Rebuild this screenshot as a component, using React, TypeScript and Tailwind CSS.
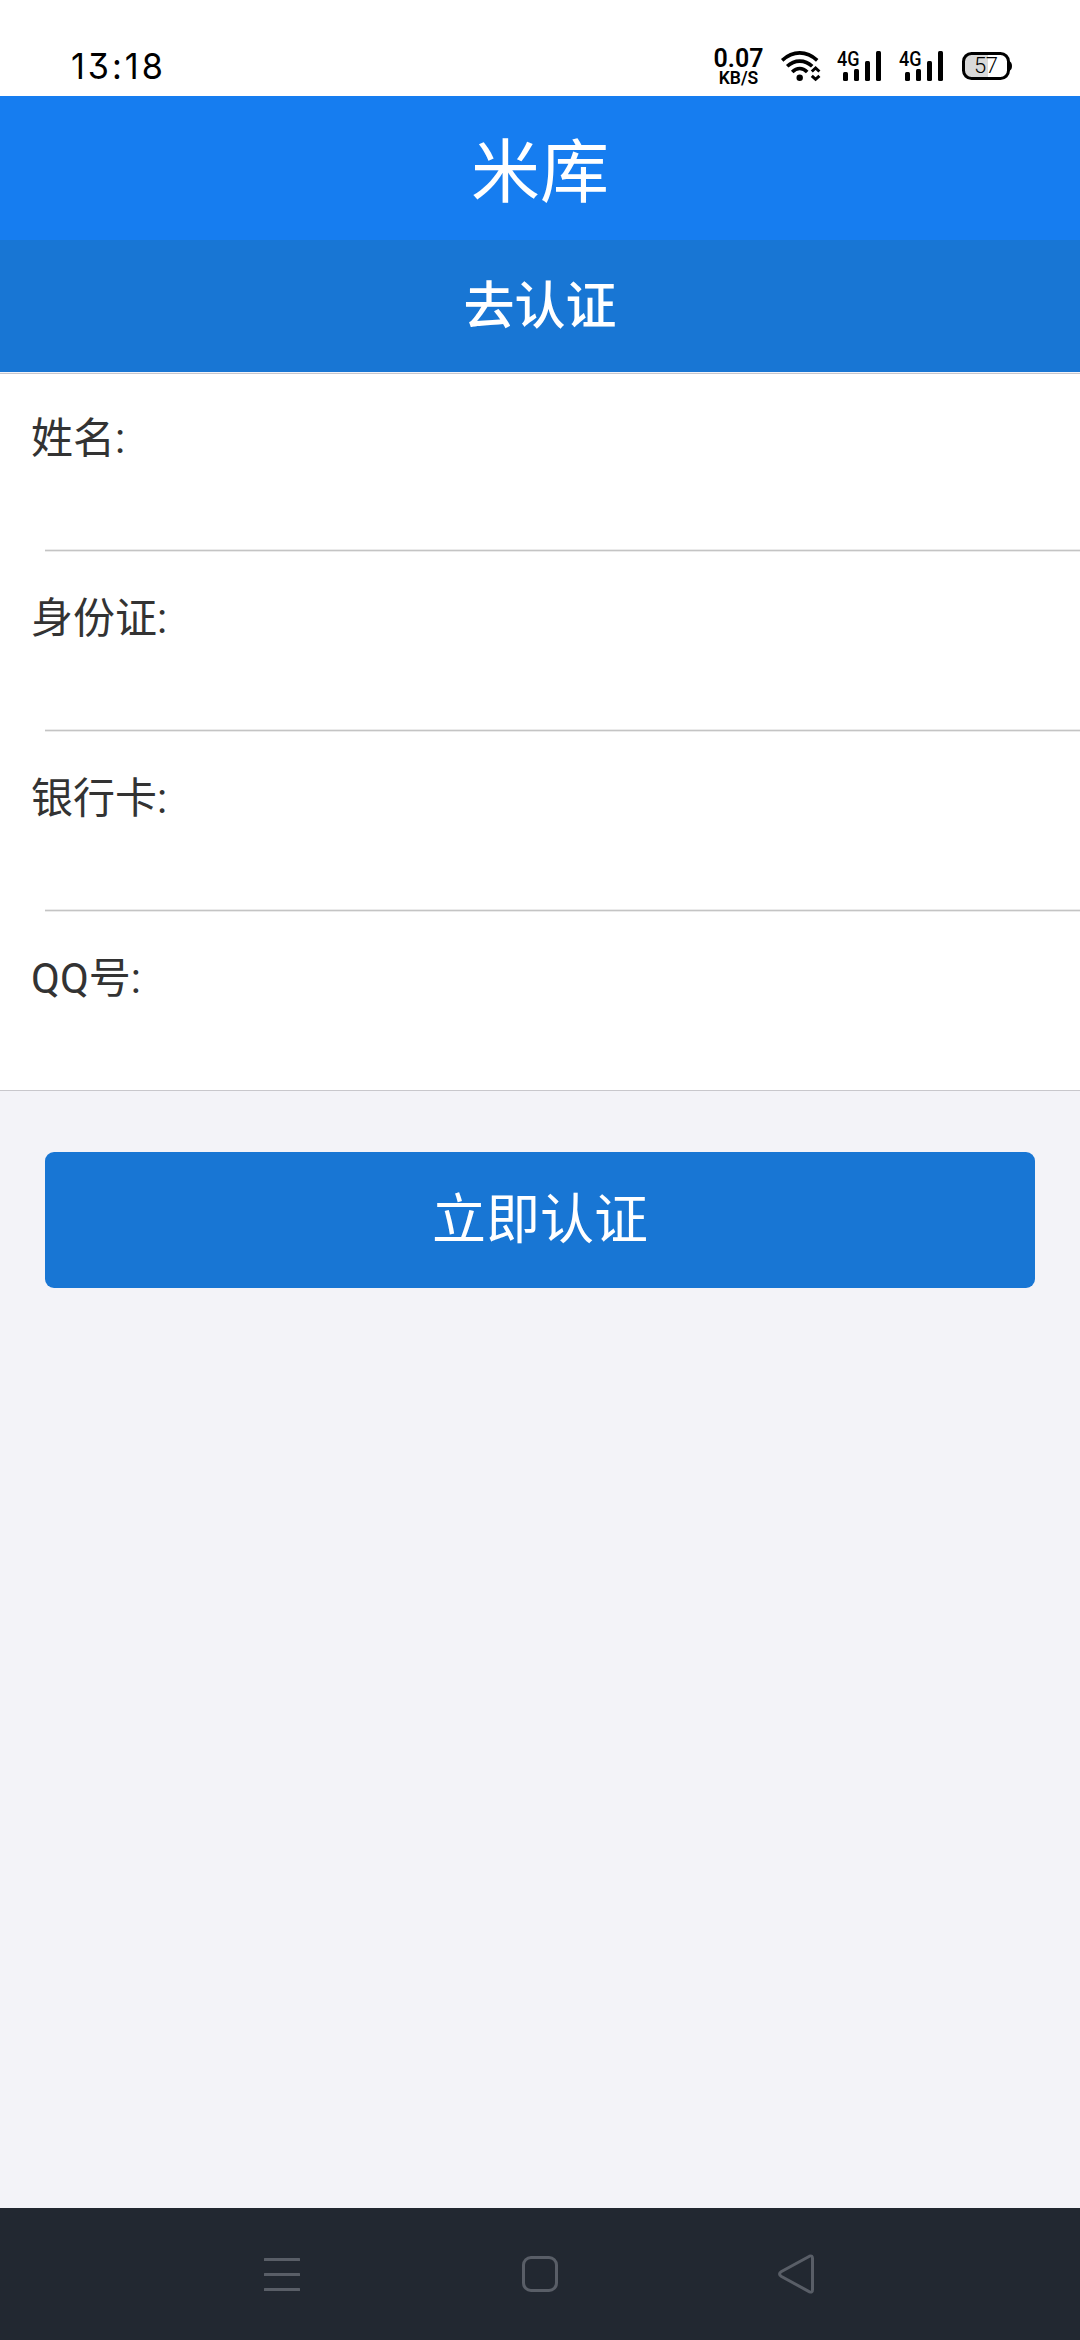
import React, { useState } from 'react';

const fields = [
  { id: 'name', label: '姓名:' },
  { id: 'idCard', label: '身份证:' },
  { id: 'bankCard', label: '银行卡:' },
  { id: 'qq', label: 'QQ号:' },
];

const WifiIcon: React.FC = () => (
  <svg width="42" height="32" viewBox="0 0 42 32" fill="none" stroke="#000" strokeWidth="3.6">
    <path d="M2.2 10.3C13 .4 26.4 .4 37.2 10.3" />
    <path d="M7.2 16.3C14.5 9.4 25 9.4 32.2 16.3" />
    <path d="M12.2 22C16.8 17.4 22.6 17.4 27.2 22" />
    <circle cx="19.7" cy="27.7" r="3.2" fill="#000" stroke="none" />
    <path d="M31.8 21.5L35.6 18L39.4 21.5M31.8 25.8L35.6 29.3L39.4 25.8" strokeWidth="3" />
  </svg>
);

const SignalIcon: React.FC = () => (
  <svg width="46" height="32" viewBox="0 0 46 32" className="overflow-visible font-[Roboto,sans-serif] font-medium">
    <text x="0" y="15.8" fontSize="20" textLength="22.5" lengthAdjust="spacingAndGlyphs">
      4G
    </text>
    <rect x="6" y="22" width="5" height="9" rx="1.5" />
    <rect x="17" y="19" width="5" height="12" rx="1.5" />
    <rect x="28" y="11" width="5" height="20" rx="1.5" />
    <rect x="39" y="1" width="5" height="30" rx="1.5" />
  </svg>
);

const BatteryIcon: React.FC = () => (
  <svg width="52" height="30" viewBox="0 0 52 30" className="font-[Roboto,sans-serif]">
    <path d="M10 3H27V27H10Q3 27 3 20V10Q3 3 10 3Z" fill="#d9d9d9" />
    <rect x="2.5" y="2.5" width="45" height="25" rx="8" fill="none" stroke="#000" strokeWidth="3" />
    <path d="M48 10Q51 11 51 15Q51 19 48 20Z" />
    <text x="13" y="22.2" fontSize="22" fontWeight="300" textLength="24">
      57
    </text>
  </svg>
);

const StatusBar: React.FC = () => (
  <div className="flex h-24 shrink-0 items-start justify-between bg-white pl-[71px] pr-[67px] text-black">
    <span className="mt-[43px] origin-left scale-x-95 font-[Inter,sans-serif] text-[36px] leading-[46px] tracking-[3.1px] [font-feature-settings:'cv09']">
      13:18
    </span>
    <div className="mt-[50px] flex items-start font-[Roboto,sans-serif]">
      <div className="-mt-[2px] mr-[17px] flex w-[49px] flex-col items-center font-semibold">
        <span className="text-[25px] leading-[22px]">0.07</span>
        <span className="text-[17.5px] leading-[16px]">KB/S</span>
      </div>
      <WifiIcon />
      <div className="ml-[15px] flex gap-4">
        <SignalIcon />
        <SignalIcon />
      </div>
      <div className="ml-[16px] mt-[1px]">
        <BatteryIcon />
      </div>
    </div>
  </div>
);

const NavigationBar: React.FC = () => (
  <div className="flex h-[132px] shrink-0 items-center justify-between bg-[#222831] px-[262px]">
    <svg width="40" height="42" viewBox="0 0 40 42" fill="#595e67">
      <rect x="2" y="5" width="36" height="3" rx="0.5" />
      <rect x="2" y="20" width="36" height="3" rx="0.5" />
      <rect x="2" y="35" width="36" height="3" rx="0.5" />
    </svg>
    <svg width="40" height="42" viewBox="0 0 40 42" fill="none" stroke="#595e67" strokeWidth="3">
      <rect x="3.5" y="4.5" width="33" height="33" rx="7.5" />
    </svg>
    <svg width="40" height="42" viewBox="0 0 40 42" fill="none" stroke="#595e67" strokeWidth="3">
      <path d="M31.5 3.2L3.5 18.5Q-.5 21 3.5 23.5L31.5 38.8Q34.5 40 34.5 36.5V5.5Q34.5 2 31.5 3.2Z" />
    </svg>
  </div>
);

const App: React.FC = () => {
  const [values, setValues] = useState<Record<string, string>>({});

  const handleChange = (id: string, value: string) => {
    setValues((prev) => ({ ...prev, [id]: value }));
  };

  return (
    <div className="flex h-[2340px] w-[1080px] flex-col bg-[#f3f3f8] font-[Roboto,'Noto_Sans_CJK_SC',sans-serif]">
      <StatusBar />

      <header className="shrink-0 text-center text-white">
        <div className="h-36 bg-[#167df0] text-[69px] leading-[156px]">米库</div>
        <h1 className="h-[132px] bg-[#1876d4] text-[51px] font-medium leading-[133px]">去认证</h1>
      </header>

      <main className="grow pt-px">
        {/* Form */}
        <div className="border-y border-[#c8c7cc] bg-white">
          {fields.map((field, index) => (
            <label
              key={field.id}
              className="flex h-[180px] flex-col pt-[37px] text-[#333] first:h-[178px] first:pt-[35px] last:h-[178px]"
            >
              <span className="pl-[31px] text-[42px] leading-[60px]">{field.label}</span>
              <input
                value={values[field.id] ?? ''}
                onChange={(e) => handleChange(field.id, e.target.value)}
                className="min-h-0 w-full grow px-[45px] text-[42px] outline-none"
              />
              {index < fields.length - 1 && (
                <div className="ml-[45px] h-[3px] shrink-0 border-y border-[#ebebeb] bg-[#c4c4c4]" />
              )}
            </label>
          ))}
        </div>

        <div className="px-[45px] pt-[61px]">
          <button className="block h-[136px] w-full rounded-[9px] bg-[#1876d4] text-[54px] leading-[138px] text-white">
            立即认证
          </button>
        </div>
      </main>

      <NavigationBar />
    </div>
  );
};

export default App;
